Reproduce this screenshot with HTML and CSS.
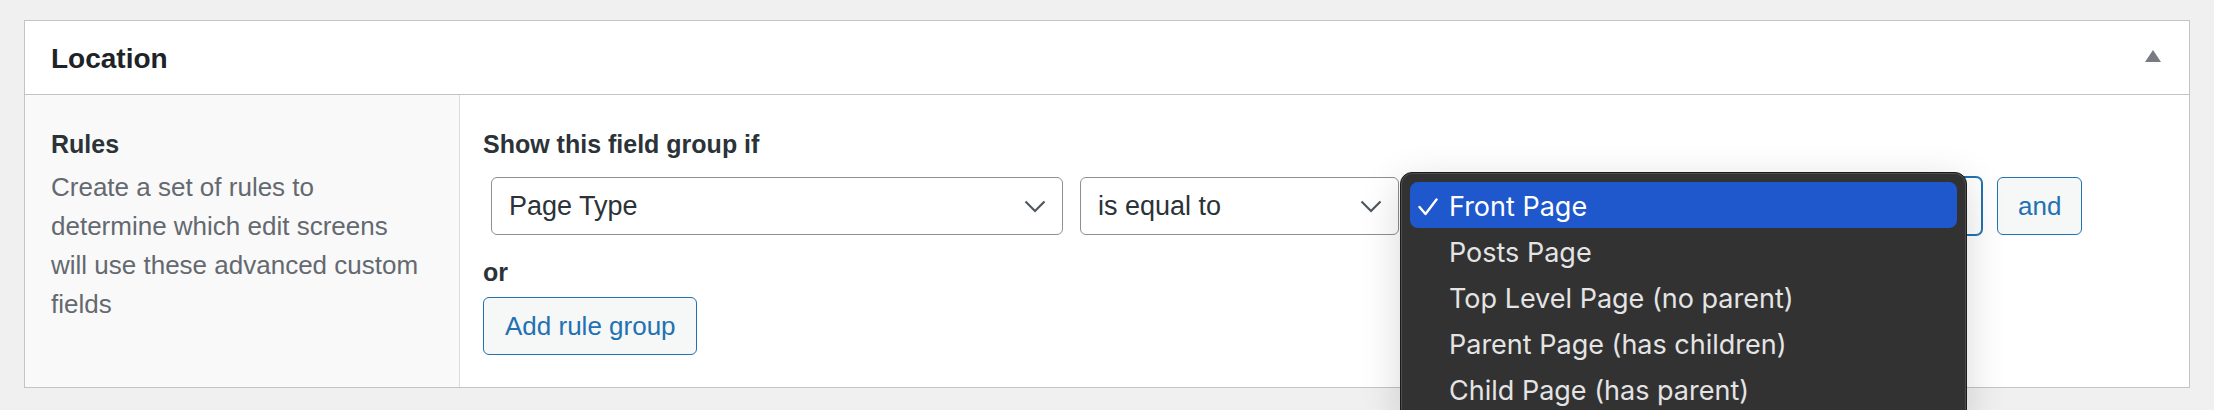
FILE: index.html
```html
<!DOCTYPE html>
<html lang="en">
<head>
<meta charset="utf-8">
<title>Location</title>
<link rel="stylesheet" href="styles.css">
</head>
<body>
<div class="page">
  <div class="postbox">
    <div class="postbox-header">
      <h2 class="postbox-title">Location</h2>
      <svg class="toggle" width="16" height="12" viewBox="0 0 16 12"><polygon points="8,0 16,12 0,12" fill="#787c82"/></svg>
    </div>
    <div class="postbox-body">
      <div class="label-col">
        <div class="label">Rules</div>
        <p class="description">Create a set of rules to determine which edit screens will use these advanced custom fields</p>
      </div>
      <div class="input-col">
        <h4 class="group-title">Show this field group if</h4>
        <div class="rule-row">
          <div class="select select-param">
            <span>Page Type</span>
            <svg class="chevron" width="22" height="13" viewBox="0 0 22 13"><polyline points="1.5,1.5 11,11 20.5,1.5" fill="none" stroke="#50575e" stroke-width="2.2"/></svg>
          </div>
          <div class="select select-op">
            <span>is equal to</span>
            <svg class="chevron" width="22" height="13" viewBox="0 0 22 13"><polyline points="1.5,1.5 11,11 20.5,1.5" fill="none" stroke="#50575e" stroke-width="2.2"/></svg>
          </div>
          <div class="select-wrap">
            <div class="select select-value">
              <svg class="chevron" width="22" height="13" viewBox="0 0 22 13"><polyline points="1.5,1.5 11,11 20.5,1.5" fill="none" stroke="#50575e" stroke-width="2.2"/></svg>
            </div>
            <div class="menu">
              <div class="menu-item is-selected">
                <svg class="check" width="20" height="18" viewBox="0 0 20 18"><polyline points="1.5,9 7.5,16 18.5,1.5" fill="none" stroke="#ffffff" stroke-width="2.4" stroke-linecap="round" stroke-linejoin="round"/></svg>
                <span>Front Page</span>
              </div>
              <div class="menu-item"><span>Posts Page</span></div>
              <div class="menu-item"><span>Top Level Page (no parent)</span></div>
              <div class="menu-item"><span>Parent Page (has children)</span></div>
              <div class="menu-item"><span>Child Page (has parent)</span></div>
            </div>
          </div>
          <button class="btn btn-and" type="button">and</button>
        </div>
        <h4 class="or">or</h4>
        <button class="btn btn-add" type="button">Add rule group</button>
      </div>
    </div>
  </div>
</div>
</body>
</html>
```

FILE: styles.css
```css
html, body {
  margin: 0;
  height: 100%;
  overflow: hidden;
  background: #f0f0f1;
}

body {
  font-family: "Liberation Sans", Arial, sans-serif;
  color: #2c3338;
}

.page {
  padding: 20px 24px 0;
}

.postbox {
  border: 1px solid #c3c4c7;
  background: #ffffff;
}

.postbox-header {
  height: 73px;
  display: flex;
  align-items: center;
  justify-content: space-between;
  padding: 0 28px 0 26px;
  border-bottom: 1px solid #c3c4c7;
}

.postbox-title {
  margin: 3px 0 0;
  font-size: 28px;
  line-height: 1;
  font-weight: 700;
  color: #1d2327;
}

.toggle {
  display: block;
  margin-bottom: 3px;
}

.postbox-body {
  display: flex;
}

.label-col {
  width: 435px;
  box-sizing: border-box;
  padding: 33px 36px 0 26px;
  background: #f9f9f9;
  border-right: 1px solid #dcdcde;
}

.label {
  font-size: 25px;
  line-height: 32px;
  font-weight: 700;
  color: #2c3338;
}

.description {
  margin: 8px 0 0;
  font-size: 26px;
  line-height: 39px;
  color: #646970;
}

.input-col {
  flex: 1;
  padding: 33px 0 32px 23px;
}

.group-title {
  margin: 0;
  font-size: 25px;
  line-height: 32px;
  font-weight: 700;
  color: #2c3338;
}

.rule-row {
  display: flex;
  align-items: center;
  margin: 17px 0 0 8px;
}

.select {
  height: 58px;
  box-sizing: border-box;
  border: 1px solid #8c8f94;
  border-radius: 6px;
  background: #ffffff;
  display: flex;
  align-items: center;
  justify-content: space-between;
  padding: 0 16px 0 17px;
  font-size: 27px;
  line-height: 1;
  color: #2c3338;
}

.chevron {
  display: block;
}

.select-param {
  width: 572px;
}

.select-op {
  width: 319px;
  margin-left: 17px;
}

.select-wrap {
  position: relative;
  margin-left: 17px;
}

.select-value {
  width: 566px;
  justify-content: flex-end;
  border-color: #2271b1;
  box-shadow: 0 0 0 1px #2271b1;
}

.btn {
  height: 58px;
  box-sizing: border-box;
  border: 1px solid #2271b1;
  border-radius: 6px;
  background: #f6f7f7;
  color: #2271b1;
  font-family: "Liberation Sans", Arial, sans-serif;
  font-size: 26px;
  line-height: 1;
  padding: 0 20px;
  margin: 0;
}

.btn-and {
  margin-left: 15px;
}

.or {
  margin: 21px 0 0;
  font-size: 25px;
  line-height: 32px;
  font-weight: 700;
  color: #2c3338;
}

.btn-add {
  display: block;
  margin-top: 9px;
  padding: 0 20px 0 21px;
}

.menu {
  position: absolute;
  left: -16px;
  top: -5px;
  width: 567px;
  box-sizing: border-box;
  padding: 9px;
  background: #323232;
  border: 1px solid #1b1b1b;
  border-radius: 12px;
  box-shadow: inset 0 0 0 1px rgba(255, 255, 255, 0.14), 0 10px 40px rgba(0, 0, 0, 0.16);
  font-family: Inter, "Noto Sans", sans-serif;
  font-size: 27px;
  line-height: 1;
  color: #e4e4e4;
  z-index: 10;
}

.menu-item {
  position: relative;
  height: 46px;
  box-sizing: border-box;
  display: flex;
  align-items: center;
  padding: 3px 0 0 39px;
  border-radius: 8px;
}

.menu-item.is-selected {
  background: #1f57cc;
  color: #ffffff;
}

.check {
  position: absolute;
  left: 8px;
  top: 16px;
}
```
